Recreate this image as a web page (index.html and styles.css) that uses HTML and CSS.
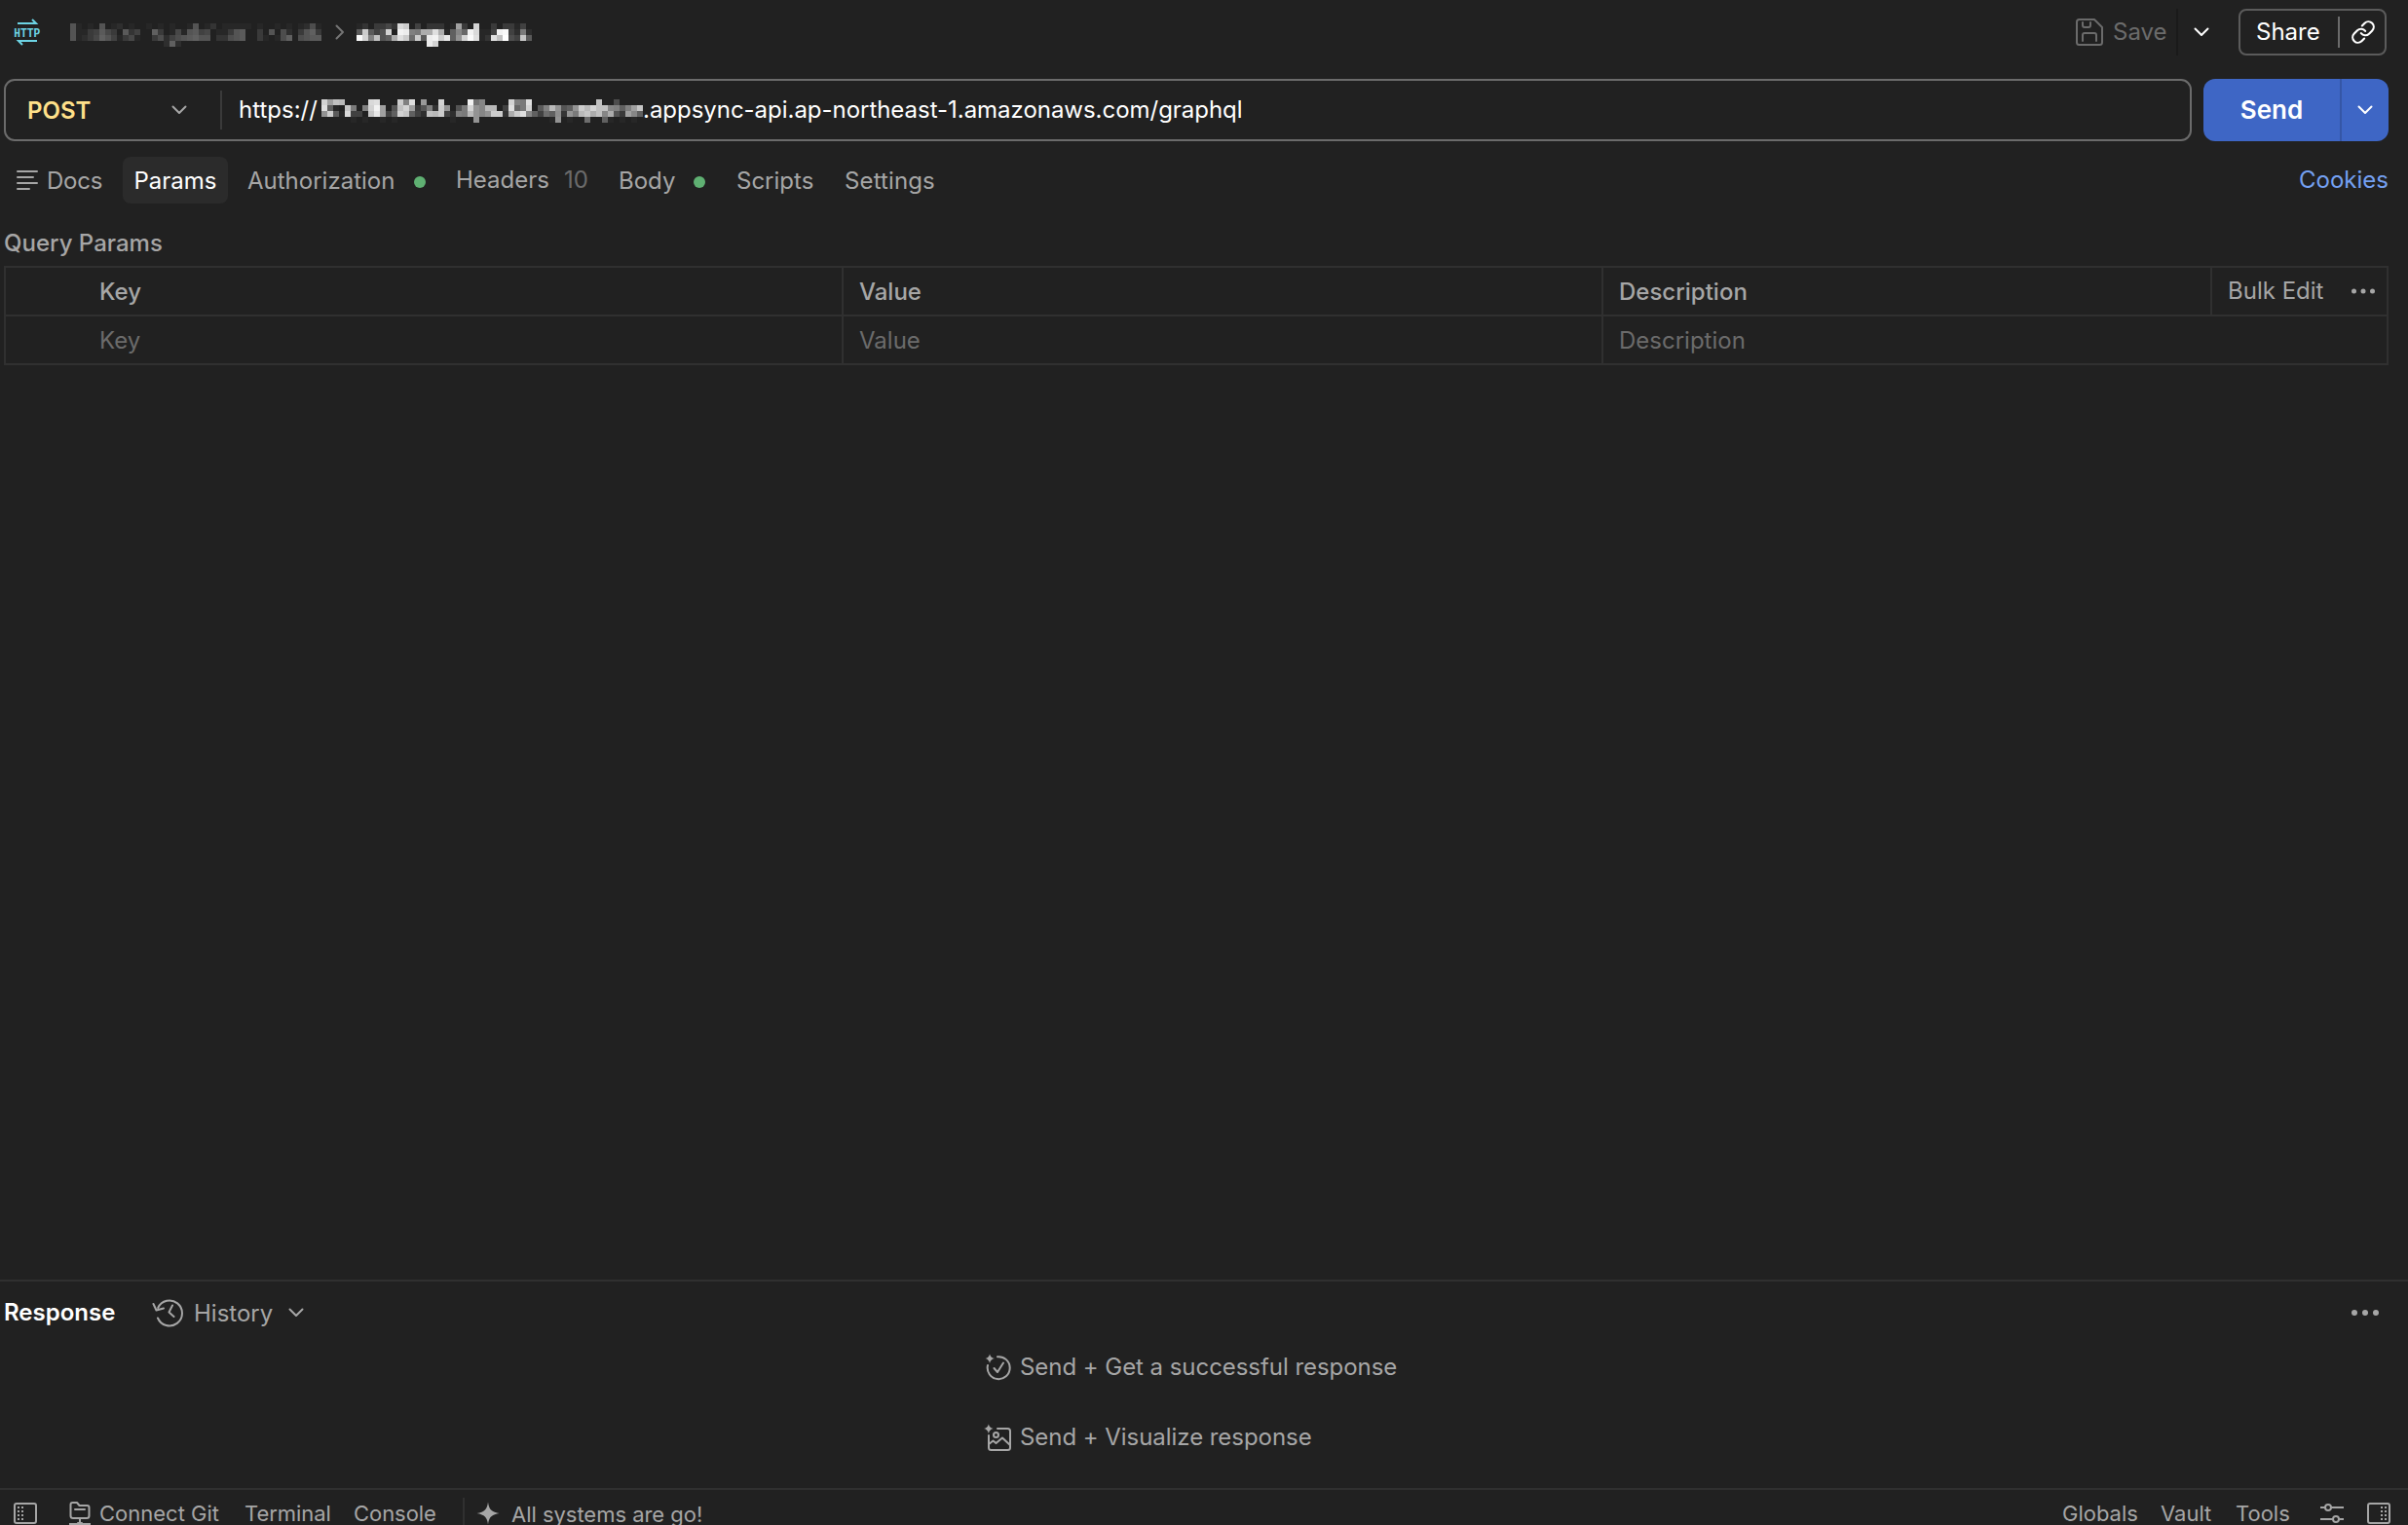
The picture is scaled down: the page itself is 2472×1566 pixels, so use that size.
FILE: index.html
```html
<!DOCTYPE html>
<html lang="en">
<head>
<meta charset="utf-8">
<title>HTTP request</title>
<link rel="stylesheet" href="styles.css">
</head>
<body>
<div class="app">
  <header class="topbar">
    <svg class="http-icon" viewBox="0 0 30 28" width="30" height="28">
      <path d="M5 5H24L20 1M25 23H6L10 27" />
      <text x="1.2" y="18.800" textLength="27" lengthAdjust="spacingAndGlyphs">HTTP</text>
    </svg>
    <svg class="mosaic crumb-parent" width="258" height="24" data-mosaic="parent"></svg>
    <svg class="ico crumb-sep" viewBox="0 0 10 16" width="10" height="16"><path d="M1.5 1.5L8 8L1.5 14.5"/></svg>
    <svg class="mosaic crumb-name" width="180" height="24" data-mosaic="name"></svg>
    <div class="top-actions">
      <div class="save">
        <svg class="ico" viewBox="0 0 28 28" width="28" height="28"><path d="M3.5 1H19L27 9V24.5Q27 27 24.5 27H3.5Q1 27 1 24.5V3.500Q1 1 3.500 1ZM7 23V17Q7 15 9 15H19Q21 15 21 17V23M7 4V7Q7 9 9 9H13Q15 9 15 7V4"/></svg>
        <span class="t-save">Save</span>
      </div>
      <div class="save-more"><svg class="ico" viewBox="0 0 16 10" width="16" height="10"><path d="M1.500 1.500L8 8L14.500 1.500"/></svg></div>
      <div class="share">
        <span class="t-share">Share</span>
        <span class="share-line"></span>
        <svg class="ico" viewBox="0 0 24 24" width="26" height="26"><path d="M10 13a5 5 0 0 0 7.540.540l3-3a5 5 0 0 0-7.070-7.070l-2.500 2.500M14 11a5 5 0 0 0-7.540-.540l-3 3a5 5 0 0 0 7.070 7.070l2.500-2.500"/></svg>
      </div>
    </div>
  </header>

  <section class="request">
    <div class="url-box">
      <div class="method"><span class="t-post">POST</span><svg class="ico" viewBox="0 0 16 10" width="16" height="10"><path d="M1.500 1.500L8 8L14.500 1.500"/></svg></div>
      <div class="url"><span class="t-scheme">https://</span><svg class="mosaic" width="330" height="24" data-mosaic="host"></svg><span class="t-url">.appsync-api.ap-northeast-1.amazonaws.com/graphql</span></div>
    </div>
    <div class="send">
      <div class="send-main"><span class="t-send">Send</span></div>
      <div class="send-more"><svg class="ico" viewBox="0 0 16 10" width="16" height="10"><path d="M1.500 1.500L8 8L14.500 1.500"/></svg></div>
    </div>
  </section>

  <nav class="tabs">
    <div class="tab docs"><svg class="ico" viewBox="0 0 22 22" width="22" height="22"><path d="M1 2H21M1 8H17M1 14H21M1 20H13"/></svg><span>Docs</span></div>
    <div class="tab params"><span>Params</span></div>
    <div class="tab auth"><span>Authorization</span><i class="dot"></i></div>
    <div class="tab headers"><span>Headers</span><span class="count">10</span></div>
    <div class="tab body"><span>Body</span><i class="dot"></i></div>
    <div class="tab scripts"><span>Scripts</span></div>
    <div class="tab settings"><span>Settings</span></div>
    <div class="cookies"><span>Cookies</span></div>
  </nav>

  <main class="content">
    <h2 class="section-title"><span>Query Params</span></h2>
    <div class="table">
      <div class="row head">
        <div class="cell key"><span>Key</span></div>
        <div class="cell value"><span>Value</span></div>
        <div class="cell desc"><span>Description</span></div>
        <div class="cell bulk"><span>Bulk Edit</span><svg class="dots" viewBox="0 0 24 6" width="24" height="6"><circle cx="2.500" cy="3" r="2.500"/><circle cx="12" cy="3" r="2.500"/><circle cx="21.500" cy="3" r="2.500"/></svg></div>
      </div>
      <div class="row entry">
        <div class="cell key"><span>Key</span></div>
        <div class="cell value"><span>Value</span></div>
        <div class="cell desc-wide"><span>Description</span></div>
      </div>
    </div>
  </main>

  <section class="response">
    <div class="response-head">
      <span class="t-response">Response</span>
      <svg class="ico history-icon" viewBox="0 0 32 30" width="32" height="30"><path d="M6.200 10A13 13 0 1 1 6 20.500M1.500 6L4.500 12.500L12 10.500M21 7.500L17.500 14.500L22.500 19"/></svg>
      <span class="t-history">History</span>
      <svg class="ico history-chev" viewBox="0 0 16 10" width="16" height="10"><path d="M1.500 1.500L8 8L14.500 1.500"/></svg>
      <svg class="dots response-dots" viewBox="0 0 28 6" width="28" height="6"><circle cx="3" cy="3" r="3"/><circle cx="14" cy="3" r="3"/><circle cx="25" cy="3" r="3"/></svg>
    </div>
    <div class="hints">
      <div class="hint">
        <svg class="ico" viewBox="0 0 28 28" width="28" height="28"><path d="M14 3.200A11.500 11.500 0 1 1 4 12M10.500 15L14 19L20 9.500"/><path class="fill" d="M6 0.500Q6.800 4.200 11 5Q6.800 5.800 6 10Q5.200 5.800 1.500 5Q5.200 4.200 6 0.500Z"/></svg>
        <span>Send + Get a successful response</span>
      </div>
      <div class="hint">
        <svg class="ico" viewBox="0 0 28 28" width="28" height="28"><path d="M14 5H24.500Q27 5 27 7.500V24.500Q27 27 24.500 27H7.500Q5 27 5 24.500V12M5 21L9.500 17.500L12.500 20L19 14.500L27 22"/><circle cx="12.500" cy="11.500" r="2.500"/><path class="fill" d="M4.800 0.500Q5.600 4.200 9.600 5Q5.600 5.800 4.800 10Q4 5.800 0 5Q4 4.200 4.800 0.500Z"/></svg>
        <span>Send + Visualize response</span>
      </div>
    </div>
  </section>

  <footer class="statusbar">
    <svg class="ico sb-panel" viewBox="0 0 24 22" width="24" height="22"><rect x="1" y="1" width="22" height="20" rx="2"/><path class="fill" d="M4 4h2v2h-2zM8 4h2v2h-2zM4 8h2v2h-2zM8 8h2v2h-2zM4 12h2v2h-2zM8 12h2v2h-2zM4 16h2v2h-2zM8 16h2v2h-2z"/></svg>
    <svg class="ico sb-git" viewBox="0 0 22 24" width="22" height="24"><path d="M3.500 1H8L10.500 4H18.500Q20.500 4 20.500 6V14.500Q20.500 17 18 17H4Q1.500 17 1.500 14.500V3Q1.500 1 3.500 1ZM6 8H16M11 17V22M0 23H22M9 22H13"/></svg>
    <span class="t-git">Connect Git</span>
    <span class="t-terminal">Terminal</span>
    <span class="t-console">Console</span>
    <span class="sb-line"></span>
    <svg class="sb-star" viewBox="0 0 24 24" width="24" height="24"><path d="M12 0.500C13 8 15.500 10.500 23.500 12C15.500 13.500 13 16 12 23.500C11 16 8.500 13.500 0.500 12C8.500 10.500 11 8 12 0.500Z"/></svg>
    <span class="t-systems">All systems are go!</span>
    <div class="sb-right">
      <span class="t-globals">Globals</span>
      <span class="t-vault">Vault</span>
      <span class="t-tools">Tools</span>
      <svg class="ico sb-sliders" viewBox="0 0 24 22" width="24" height="22"><path d="M0 5H5M11 5H24M0 17H13M19 17H24"/><circle cx="8" cy="5" r="3"/><circle cx="16" cy="17" r="3"/></svg>
      <svg class="ico" viewBox="0 0 24 22" width="24" height="22"><rect x="1" y="1" width="22" height="20" rx="2"/><path class="fill" d="M14 4h2v2h-2zM18 4h2v2h-2zM14 8h2v2h-2zM18 8h2v2h-2zM14 12h2v2h-2zM18 12h2v2h-2zM14 16h2v2h-2zM18 16h2v2h-2z"/></svg>
    </div>
  </footer>
</div>
<script src="mosaic.js"></script>
</body>
</html>
```
FILE: mosaic.js
```js
// Redacted names: each character is the brightness of one 6px cell (base 36, 0 = page background).
const CELL = 6;
const rows = {
  parent: [
    "8101080120100101010018013011111010010101271",
    "81145964093500a40161895601148900408072048a4",
    "81246a851461004725789a880337890041017a07899",
    "00000000000000002a2"
  ],
  name: [
    "1304463tr05033301k40s004044150",
    "9r958s0xwfemmum1agbxt115xy52e2",
    "ysfp8amurcr9wxrvaisyu13upz75q9",
    "000000000000ws"
  ],
  host: [
    "skpo0000tu000rfu0j00s0000xdg0000sfeu00000000000p0070000",
    "ua10qe0fsxk08psk48f3ri08esigoo05ubes09foi8airosppgfafkq",
    "ir91t550qvk5asqa52por52feoigirr3mruga5cah3ieoqmpgm84kga",
    "00000101001010000000001000i0000000000001i0100c00a101010"
  ]
};
document.querySelectorAll("[data-mosaic]").forEach(svg => {
  rows[svg.dataset.mosaic].forEach((row, y) => {
    [...row].forEach((c, x) => {
      const level = parseInt(c, 36);
      if (!level) return;
      const grey = Math.round(33 + level * 6.34);
      const r = document.createElementNS("http://www.w3.org/2000/svg", "rect");
      r.setAttribute("x", x * CELL);
      r.setAttribute("y", y * CELL);
      r.setAttribute("width", CELL);
      r.setAttribute("height", CELL);
      r.setAttribute("fill", `rgb(${grey},${grey},${grey})`);
      svg.append(r);
    });
  });
});
```
FILE: styles.css
```css
* { box-sizing: border-box; margin: 0; padding: 0; }
body {
  background: #212121;
  color: #a6a6a6;
  font-family: Inter, "Liberation Sans", sans-serif;
  font-size: 24px;
  line-height: 30px;
  white-space: nowrap;
  overflow: hidden;
}
svg { display: block; flex: none; }
.app { width: 2472px; height: 1566px; display: flex; flex-direction: column; overflow: hidden; }
.ico { fill: none; stroke: currentColor; stroke-width: 2; stroke-linecap: round; stroke-linejoin: round; }
.ico .fill { fill: currentColor; stroke: none; }
.dots { fill: currentColor; }
.mosaic { shape-rendering: crispEdges; }

.topbar { height: 66px; flex: none; display: flex; align-items: center; padding-left: 13px; }
.http-icon { fill: none; stroke: #6dd3e3; stroke-width: 2; overflow: visible; }
.http-icon text { fill: #6dd3e3; stroke: none; font: 700 13.5px "Liberation Mono", monospace; }
.crumb-parent { margin: 6px 0 0 29px; }
.crumb-sep { color: #757575; margin-left: 14px; }
.crumb-name { margin: 6px 0 0 12px; }
.top-actions { margin-left: auto; display: flex; align-items: center; height: 48px; padding-right: 22px; }
.save { display: flex; align-items: center; color: #6b6b6b; height: 48px; width: 105px; gap: 10px; border-right: 2px solid #1a1a1a; }
.save-more { color: #fff; width: 62px; padding-left: 16px; }
.share { width: 152px; height: 48px; display: flex; align-items: center; border: 2px solid #5b5b5b; border-radius: 8px; color: #fff; padding-left: 16px; }
.t-share { width: 84px; }
.share-line { width: 2px; height: 32px; background: #6b6b6b; margin-right: 11px; }

.request { height: 64px; margin: 15px 20px 0 4px; flex: none; display: flex; gap: 12px; }
.url-box { width: 2246px; border: 2px solid #6b6b6b; border-radius: 11px; display: flex; align-items: center; }
.method { width: 222px; height: 40px; border-right: 2px solid #3a3a3a; display: flex; align-items: center; padding: 0 34px 0 22px; justify-content: space-between; }
.t-post { color: #ffe08a; font-weight: 600; padding-top: 2px; }
.url { display: flex; align-items: center; color: #fff; padding-left: 17px; }
.url .mosaic { margin-top: 2px; }
.t-scheme { width: 85px; }
.t-url { letter-spacing: -0.03px; }
.send { width: 190px; display: flex; background: #3e66c5; border-radius: 12px; color: #fff; }
.send-main { width: 142px; display: flex; align-items: center; justify-content: center; border-right: 2px solid #3556a6; font-weight: 600; font-size: 26px; }
.send-more { flex: 1; display: flex; align-items: center; padding-left: 16px; }

.tabs { height: 48px; margin-top: 16px; flex: none; display: flex; align-items: center; padding: 0 20px 0 17px; }
.tab { display: flex; align-items: center; height: 48px; }
.tab span { padding-top: 2px; }
.tab.headers span { padding-top: 0; }
.docs { width: 109px; gap: 9px; }
.docs span { letter-spacing: -0.2px; }
.params { width: 108px; background: #2b2b2b; border-radius: 8px; justify-content: center; color: #fff; }
.auth { margin-left: 20px; width: 214px; }
.dot { width: 12px; height: 12px; border-radius: 50%; background: #5fb072; margin-left: auto; margin-top: 4px; }
.auth .dot { margin-right: 31px; }
.headers { width: 167px; gap: 15px; }
.count { color: #6b6b6b; }
.body { width: 121px; }
.body .dot { margin-right: 32px; }
.scripts { width: 111px; }
.settings { letter-spacing: 0.12px; }
.cookies { margin-left: auto; color: #74a0f1; }

.content { flex: 1; padding-left: 4px; }
.section-title { font-size: 24px; font-weight: 500; line-height: 30px; margin-top: 26px; }
.table { width: 2448px; margin-top: 8px; border: 2px solid #303030; }
.row { display: flex; height: 48px; }
.head { height: 50px; border-bottom: 2px solid #303030; font-weight: 500; }
.entry { color: #6b6b6b; }
.cell { display: flex; align-items: center; padding: 2px 0 0 16px; border-right: 2px solid #303030; }
.key { width: 860px; padding-left: 96px; }
.value { width: 780px; }
.desc { width: 625px; }
.bulk { flex: 1; border: 0; font-weight: 400; padding: 0 12px 0 16px; justify-content: space-between; }
.desc-wide { border: 0; }

.response { height: 214px; flex: none; border-top: 2px solid #303030; }
.response-head { height: 64px; display: flex; align-items: center; padding: 0 30px 0 4px; }
.t-response { font-weight: 600; color: #fff; width: 152px; }
.t-history { margin-left: 11px; width: 97px; padding-top: 2px; }
.response-dots { margin-left: auto; }
.hints { padding-left: 1010px; }
.hint { display: flex; align-items: center; gap: 9px; height: 48px; margin-bottom: 24px; letter-spacing: -0.05px; }

.statusbar { height: 38px; flex: none; border-top: 2px solid #303030; display: flex; align-items: flex-start; padding: 8px 18px 0 14px; font-size: 22px; }
.statusbar span { margin-top: 1px; }
.statusbar .ico { margin-top: 5px; }
.statusbar .sb-git { margin: 4px 9px 0 33px; }
.t-git { width: 149px; }
.t-terminal { width: 112px; letter-spacing: -0.05px; }
.t-console { width: 112px; letter-spacing: -0.05px; }
.statusbar .sb-line { width: 2px; height: 30px; margin-top: 0; background: #303030; }
.sb-star { fill: #a6a6a6; margin: 4px 12px 0 12px; }
.statusbar .t-systems { margin-top: 2px; letter-spacing: -0.03px; }
.sb-right { margin-left: auto; display: flex; }
.t-globals { width: 101px; }
.t-vault { width: 77px; }
.t-tools { width: 87px; }
.sb-sliders { margin-right: 24px; }
```
